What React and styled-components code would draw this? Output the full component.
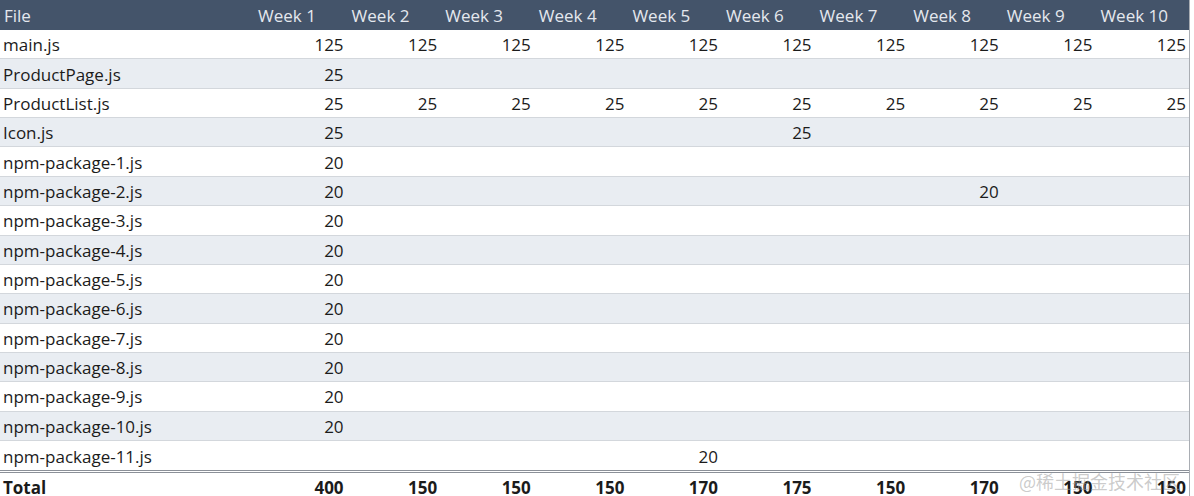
import React from 'react'
import styled, { createGlobalStyle } from 'styled-components'

const GlobalStyle = createGlobalStyle`
  html, body {
    margin: 0;
    padding: 0;
    background: #ffffff;
  }
  body {
    font-family: "Open Sans", "Liberation Sans", sans-serif;
  }
`

const weeks = ['Week 1', 'Week 2', 'Week 3', 'Week 4', 'Week 5', 'Week 6', 'Week 7', 'Week 8', 'Week 9', 'Week 10']

const rows = [
  { file: 'main.js', values: [125, 125, 125, 125, 125, 125, 125, 125, 125, 125] },
  { file: 'ProductPage.js', values: [25] },
  { file: 'ProductList.js', values: [25, 25, 25, 25, 25, 25, 25, 25, 25, 25] },
  { file: 'Icon.js', values: [25, , , , , 25] },
  { file: 'npm-package-1.js', values: [20] },
  { file: 'npm-package-2.js', values: [20, , , , , , , 20] },
  { file: 'npm-package-3.js', values: [20] },
  { file: 'npm-package-4.js', values: [20] },
  { file: 'npm-package-5.js', values: [20] },
  { file: 'npm-package-6.js', values: [20] },
  { file: 'npm-package-7.js', values: [20] },
  { file: 'npm-package-8.js', values: [20] },
  { file: 'npm-package-9.js', values: [20] },
  { file: 'npm-package-10.js', values: [20] },
  { file: 'npm-package-11.js', values: [, , , , 20] },
]

const totals = [400, 150, 150, 150, 170, 175, 150, 170, 150, 150]

const Page = styled.div`
  position: relative;
  width: 1194px;
  height: 496px;
  overflow: hidden;
`

const Sheet = styled.div`
  width: 1189px;
  border-right: 1px solid #a9adb3;
  display: flex;
  flex-direction: column;
`

const Row = styled.div`
  display: grid;
  grid-template-columns: 253px repeat(10, 1fr);
  align-items: center;
  height: ${p => p.$h}px;
  background: ${p => p.$bg};
  border-bottom: ${p => p.$line || 'none'};
  border-top: ${p => p.$top || 'none'};
  box-sizing: border-box;
`

const HeadCell = styled.div`
  color: #e4e8ee;
  font-size: 17px;
  padding-left: ${p => (p.$first ? 4 : 5)}px;
  padding-top: 1px;
  white-space: nowrap;
`

const Cell = styled.div`
  color: #1b1b1b;
  font-size: 17px;
  font-weight: ${p => (p.$bold ? 700 : 400)};
  text-align: ${p => (p.$num ? 'right' : 'left')};
  padding: ${p => (p.$num ? '1px 3px 0 0' : '1px 0 0 3px')};
  white-space: nowrap;
`

const Watermark = styled.div`
  position: absolute;
  right: 14px;
  bottom: 2px;
  font-family: "Noto Sans CJK SC", sans-serif;
  font-size: 18px;
  color: rgba(160, 160, 160, 0.55);
  pointer-events: none;
`

export default function App() {
  return (
    <Page>
      <GlobalStyle />
      <Sheet>
        <Row $h={30} $bg="#44546a">
          <HeadCell $first>File</HeadCell>
          {weeks.map(w => <HeadCell key={w}>{w}</HeadCell>)}
        </Row>
        {rows.map((r, i) => (
          <Row
            key={r.file}
            $h={29.36}
            $bg={i % 2 === 1 ? '#e9edf2' : '#ffffff'}
            $line={i === rows.length - 1 ? 'none' : '1px solid #d3d7dc'}
          >
            <Cell>{r.file}</Cell>
            {weeks.map((w, j) => (
              <Cell key={w} $num>{r.values[j] ?? ''}</Cell>
            ))}
          </Row>
        ))}
        <Row $h={30} $bg="#ffffff" $top="3px double #8b9098">
          <Cell $bold>Total</Cell>
          {totals.map((t, j) => (
            <Cell key={j} $num $bold>{t}</Cell>
          ))}
        </Row>
      </Sheet>
      <Watermark>@稀土掘金技术社区</Watermark>
    </Page>
  )
}
